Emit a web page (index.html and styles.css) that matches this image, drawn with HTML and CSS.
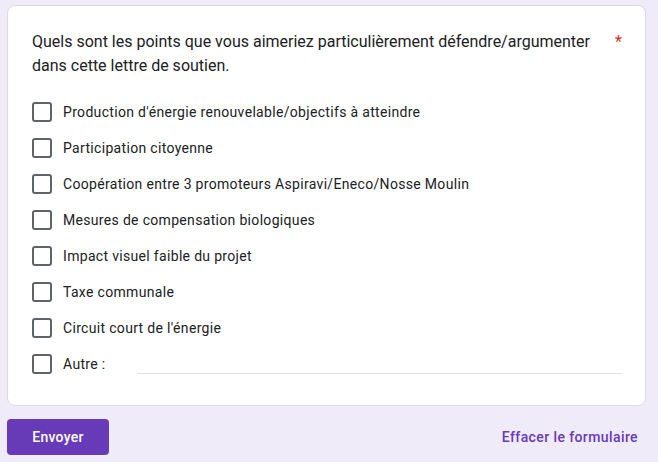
FILE: index.html
```html
<!DOCTYPE html>
<html lang="fr">
<head>
<meta charset="utf-8">
<title>Formulaire</title>
<link rel="stylesheet" href="styles.css">
</head>
<body>
<div class="page">
  <div class="card">
    <div class="question">
      <div class="question-text">Quels sont les points que vous aimeriez particulièrement défendre/argumenter dans cette lettre de soutien.</div>
      <span class="required">*</span>
    </div>
    <div class="options">
      <label class="option"><span class="box"></span><span class="label">Production d'énergie renouvelable/objectifs à atteindre</span></label>
      <label class="option"><span class="box"></span><span class="label">Participation citoyenne</span></label>
      <label class="option"><span class="box"></span><span class="label">Coopération entre 3 promoteurs Aspiravi/Eneco/Nosse Moulin</span></label>
      <label class="option"><span class="box"></span><span class="label">Mesures de compensation biologiques</span></label>
      <label class="option"><span class="box"></span><span class="label">Impact visuel faible du projet</span></label>
      <label class="option"><span class="box"></span><span class="label">Taxe communale</span></label>
      <label class="option"><span class="box"></span><span class="label">Circuit court de l'énergie</span></label>
      <div class="option"><span class="box"></span><span class="label">Autre :</span><span class="other-input"></span></div>
    </div>
  </div>
  <div class="footer">
    <button class="submit">Envoyer</button>
    <span class="clear">Effacer le formulaire</span>
  </div>
</div>
</body>
</html>
```
FILE: styles.css
```css
html, body {
  margin: 0;
  padding: 0;
  background: #f0ebf8;
}
body {
  font-family: Roboto, "Liberation Sans", Arial, sans-serif;
  color: #202124;
}
.page {
  padding: 5px 12px 0 7px;
}
.card {
  background: #ffffff;
  border: 1px solid #dadce0;
  border-radius: 8px;
  padding: 24px 23px 23px 24px;
}
.question {
  display: flex;
  align-items: flex-start;
}
.question-text {
  flex: 1;
  min-width: 0;
  font-size: 16px;
  line-height: 24px;
  letter-spacing: 0;
}
.required {
  flex: none;
  color: #d93025;
  font-size: 16px;
  line-height: 24px;
  margin-left: 6px;
}
.options {
  margin-top: 16px;
  display: flex;
  flex-direction: column;
}
.option {
  display: flex;
  align-items: center;
  height: 36px;
  font-size: 14px;
  letter-spacing: 0.32px;
}
.box {
  width: 16px;
  height: 16px;
  border: 2px solid #5f6368;
  border-radius: 3px;
  flex: none;
  margin-right: 11px;
}
.label {
  line-height: 20px;
}
.other-input {
  flex: 1;
  align-self: flex-end;
  height: 9px;
  margin-left: 31px;
  border-bottom: 1px solid #e0e0e0;
  margin-bottom: 8px;
}
.footer {
  display: flex;
  justify-content: space-between;
  align-items: center;
  margin-top: 13px;
  padding-right: 8px;
}
.submit {
  font-family: Roboto, "Liberation Sans", Arial, sans-serif;
  font-weight: 500;
  font-size: 14px;
  letter-spacing: 0.25px;
  background: #673ab7;
  color: #ffffff;
  border: none;
  border-radius: 4px;
  width: 102px;
  height: 36px;
  padding: 0;
}
.clear {
  font-weight: 500;
  font-size: 14px;
  letter-spacing: 0.4px;
  color: #673ab7;
}
```
